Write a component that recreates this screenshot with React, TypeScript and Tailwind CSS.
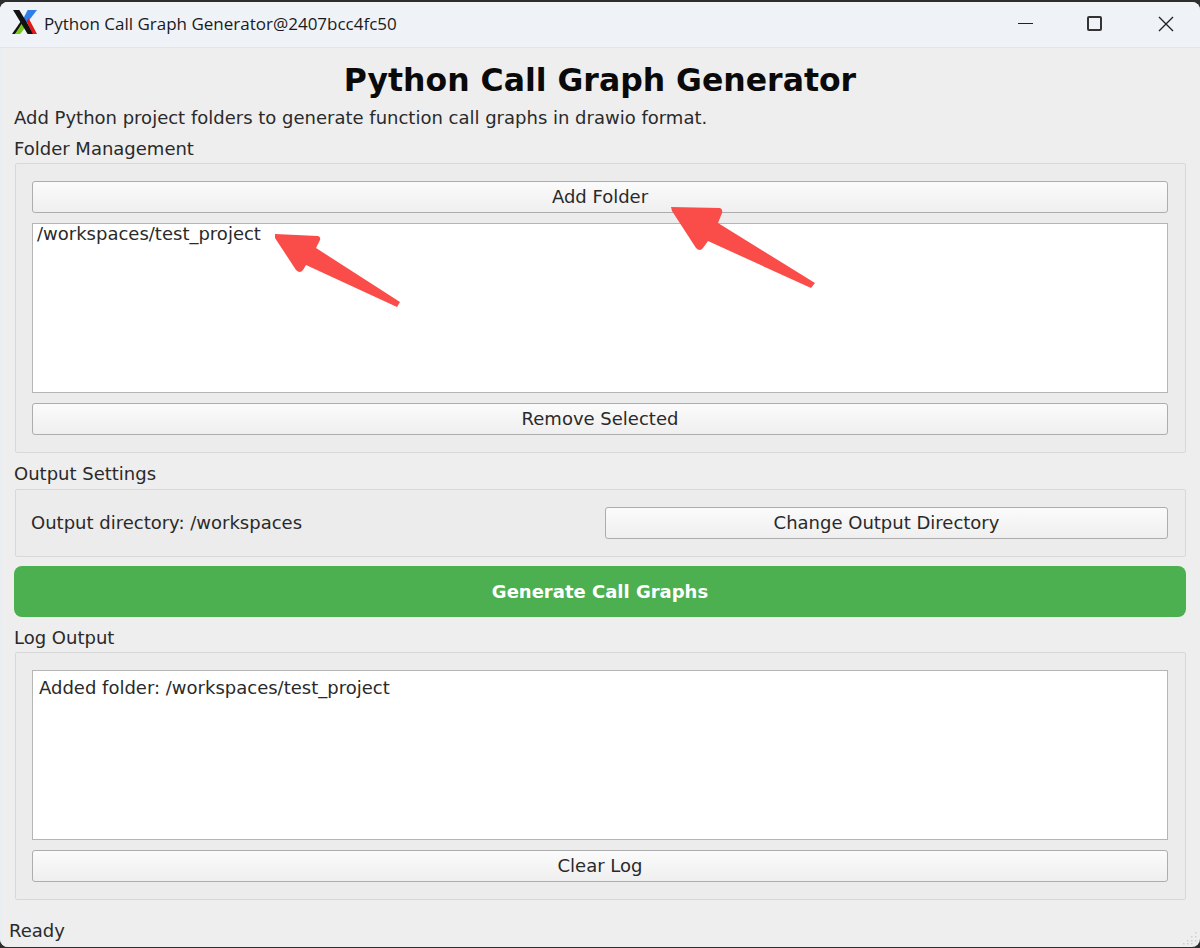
import type { ReactNode } from 'react';

function QtButton({ children }: { children: ReactNode }) {
    return (
        <button className="h-8 w-full shrink-0 rounded-[3px] border border-[#adadad] bg-gradient-to-b from-[#fbfbfb] to-[#efefef] text-[18px] leading-none text-[#2a2a2a]">
            {children}
        </button>
    );
}

function GroupLabel({ children }: { children: ReactNode }) {
    return <div className="h-[22px] pl-[14px] text-[18px] leading-[22px] text-[#2a2a2a]">{children}</div>;
}

function PyQtLogo() {
    return (
        <svg width="25" height="25" viewBox="0 0 24 24" className="shrink-0 -translate-y-px">
            <path d="M15 0 L24 0 L14 13 L11 8 Z" fill="#2f7fe8" />
            <path d="M0 23 L9 10 L11 13 L3 23 Z" fill="#111111" />
            <path d="M3 23 L10 12 L13 16 L8 23 Z" fill="#7cc820" />
            <path d="M1 0 L7 0 L21 23 L15 23 Z" fill="#111111" />
            <path d="M14 11 L16 8 L24 23 L20 23 Z" fill="#e01818" />
        </svg>
    );
}

function RedArrows() {
    return (
        <svg width="1200" height="948" viewBox="0 0 1200 948" className="pointer-events-none absolute left-0 top-0">
            <path
                d="M671 207 L720 208 Q723 209 722 213 L718 223 L815 283 L811 288 L708 241 L703 248 Q700 252 696 248 L672 211 Z"
                fill="#fa4d49"
            />
            <path
                d="M275 234 L318 236 Q321 237 320 240 L316 248 L400 302 L397 307 L306 265 L303 270 Q300 274 296 270 L275 238 Z"
                fill="#fa4d49"
            />
        </svg>
    );
}

function SizeGrip() {
    return (
        <svg width="16" height="16" viewBox="0 0 16 16" className="absolute bottom-[1px] right-[1px]">
            <g fill="#cfcfcf">
                <rect x="12" y="2" width="1.5" height="1.5" />
                <rect x="8" y="6" width="1.5" height="1.5" />
                <rect x="12" y="6" width="1.5" height="1.5" />
                <rect x="4" y="10" width="1.5" height="1.5" />
                <rect x="8" y="10" width="1.5" height="1.5" />
                <rect x="12" y="10" width="1.5" height="1.5" />
                <rect x="0" y="13" width="1.5" height="1.5" />
                <rect x="4" y="13" width="1.5" height="1.5" />
                <rect x="8" y="13" width="1.5" height="1.5" />
            </g>
        </svg>
    );
}

export default function App() {
    return (
        <div className="relative h-[948px] w-[1200px] overflow-hidden bg-[#2e2e2e] pt-[2px] font-['DejaVu_Sans',sans-serif]">
            <div className="relative flex h-[945px] flex-col overflow-hidden rounded-[8px] bg-[#eeeeee] shadow-[inset_2px_0_0_#e9eef5]">
                {/* Title bar */}
                <div className="flex h-[46px] shrink-0 items-center border-b border-[#e2e4e7] bg-[#eff3f8] pb-[2px] pl-3">
                    <PyQtLogo />
                    <span className="ml-[7px] font-['Open_Sans',sans-serif] text-[17px] text-[#1a1a1a]">
                        Python Call Graph Generator@2407bcc4fc50
                    </span>
                    <div className="ml-auto flex items-center">
                        <div className="flex h-[40px] w-[70px] items-center justify-center pl-px">
                            <div className="h-px w-[15px] bg-[#222222]" />
                        </div>
                        <div className="flex h-[40px] w-[71px] items-center justify-center pr-[2px]">
                            <div className="h-[15px] w-[15px] rounded-[2px] border-2 border-[#333333]" />
                        </div>
                        <div className="flex h-[40px] w-[69px] items-center justify-center">
                            <svg width="16" height="16" viewBox="0 0 16 16">
                                <path d="M1 1 L15 15 M15 1 L1 15" stroke="#222222" strokeWidth="1.4" />
                            </svg>
                        </div>
                    </div>
                </div>

                {/* Heading */}
                <h1 className="mt-[12px] h-[40px] shrink-0 text-center text-[31.5px] font-bold leading-[40px] text-[#0a0a0a]">
                    Python Call Graph Generator
                </h1>
                <p className="mt-[7px] h-[22px] shrink-0 pl-[14px] text-[18px] leading-[22px] text-[#2a2a2a]">
                    Add Python project folders to generate function call graphs in drawio format.
                </p>

                {/* Folder Management */}
                <div className="mt-[9px]">
                    <GroupLabel>Folder Management</GroupLabel>
                </div>
                <div className="ml-[15px] mr-[14px] mt-[3px] flex h-[290px] flex-col gap-[10px] rounded-[2px] border border-[#d8d8d8] bg-[#ececec] pl-[16px] pr-[17px] pt-[17px]">
                    <QtButton>Add Folder</QtButton>
                    <div className="h-[170px] shrink-0 border border-[#b5b5b5] bg-white px-[4px] text-[18px] leading-[20px] text-[#2a2a2a]">
                        /workspaces/test_project
                    </div>
                    <QtButton>Remove Selected</QtButton>
                </div>

                {/* Output Settings */}
                <div className="mt-[10px]">
                    <GroupLabel>Output Settings</GroupLabel>
                </div>
                <div className="ml-[15px] mr-[14px] mt-[4px] flex h-[68px] items-center rounded-[2px] border border-[#d8d8d8] bg-[#ececec] pb-[1px] pl-[16px] pr-[17px]">
                    <span className="-ml-px w-[574px] shrink-0 text-[18px] text-[#2a2a2a]">Output directory: /workspaces</span>
                    <div className="min-w-0 flex-1">
                        <QtButton>Change Output Directory</QtButton>
                    </div>
                </div>

                {/* Generate */}
                <button className="mx-[14px] mt-[9px] h-[51px] shrink-0 rounded-[8px] bg-[#4caf50] text-[18px] font-bold text-white">
                    Generate Call Graphs
                </button>

                {/* Log Output */}
                <div className="mt-[10px]">
                    <GroupLabel>Log Output</GroupLabel>
                </div>
                <div className="ml-[15px] mr-[14px] mt-[3px] flex h-[248px] flex-col gap-[10px] rounded-[2px] border border-[#d8d8d8] bg-[#ececec] pl-[16px] pr-[17px] pt-[17px]">
                    <div className="h-[170px] shrink-0 border border-[#b5b5b5] bg-white px-[6px] pt-[6px] text-[18px] leading-[22px] text-[#2a2a2a]">
                        Added folder: /workspaces/test_project
                    </div>
                    <QtButton>Clear Log</QtButton>
                </div>

                {/* Status bar */}
                <div className="mt-[20px] pl-[9px] text-[18px] leading-[22px] text-[#2a2a2a]">Ready</div>
                <SizeGrip />
            </div>
            <RedArrows />
        </div>
    );
}
